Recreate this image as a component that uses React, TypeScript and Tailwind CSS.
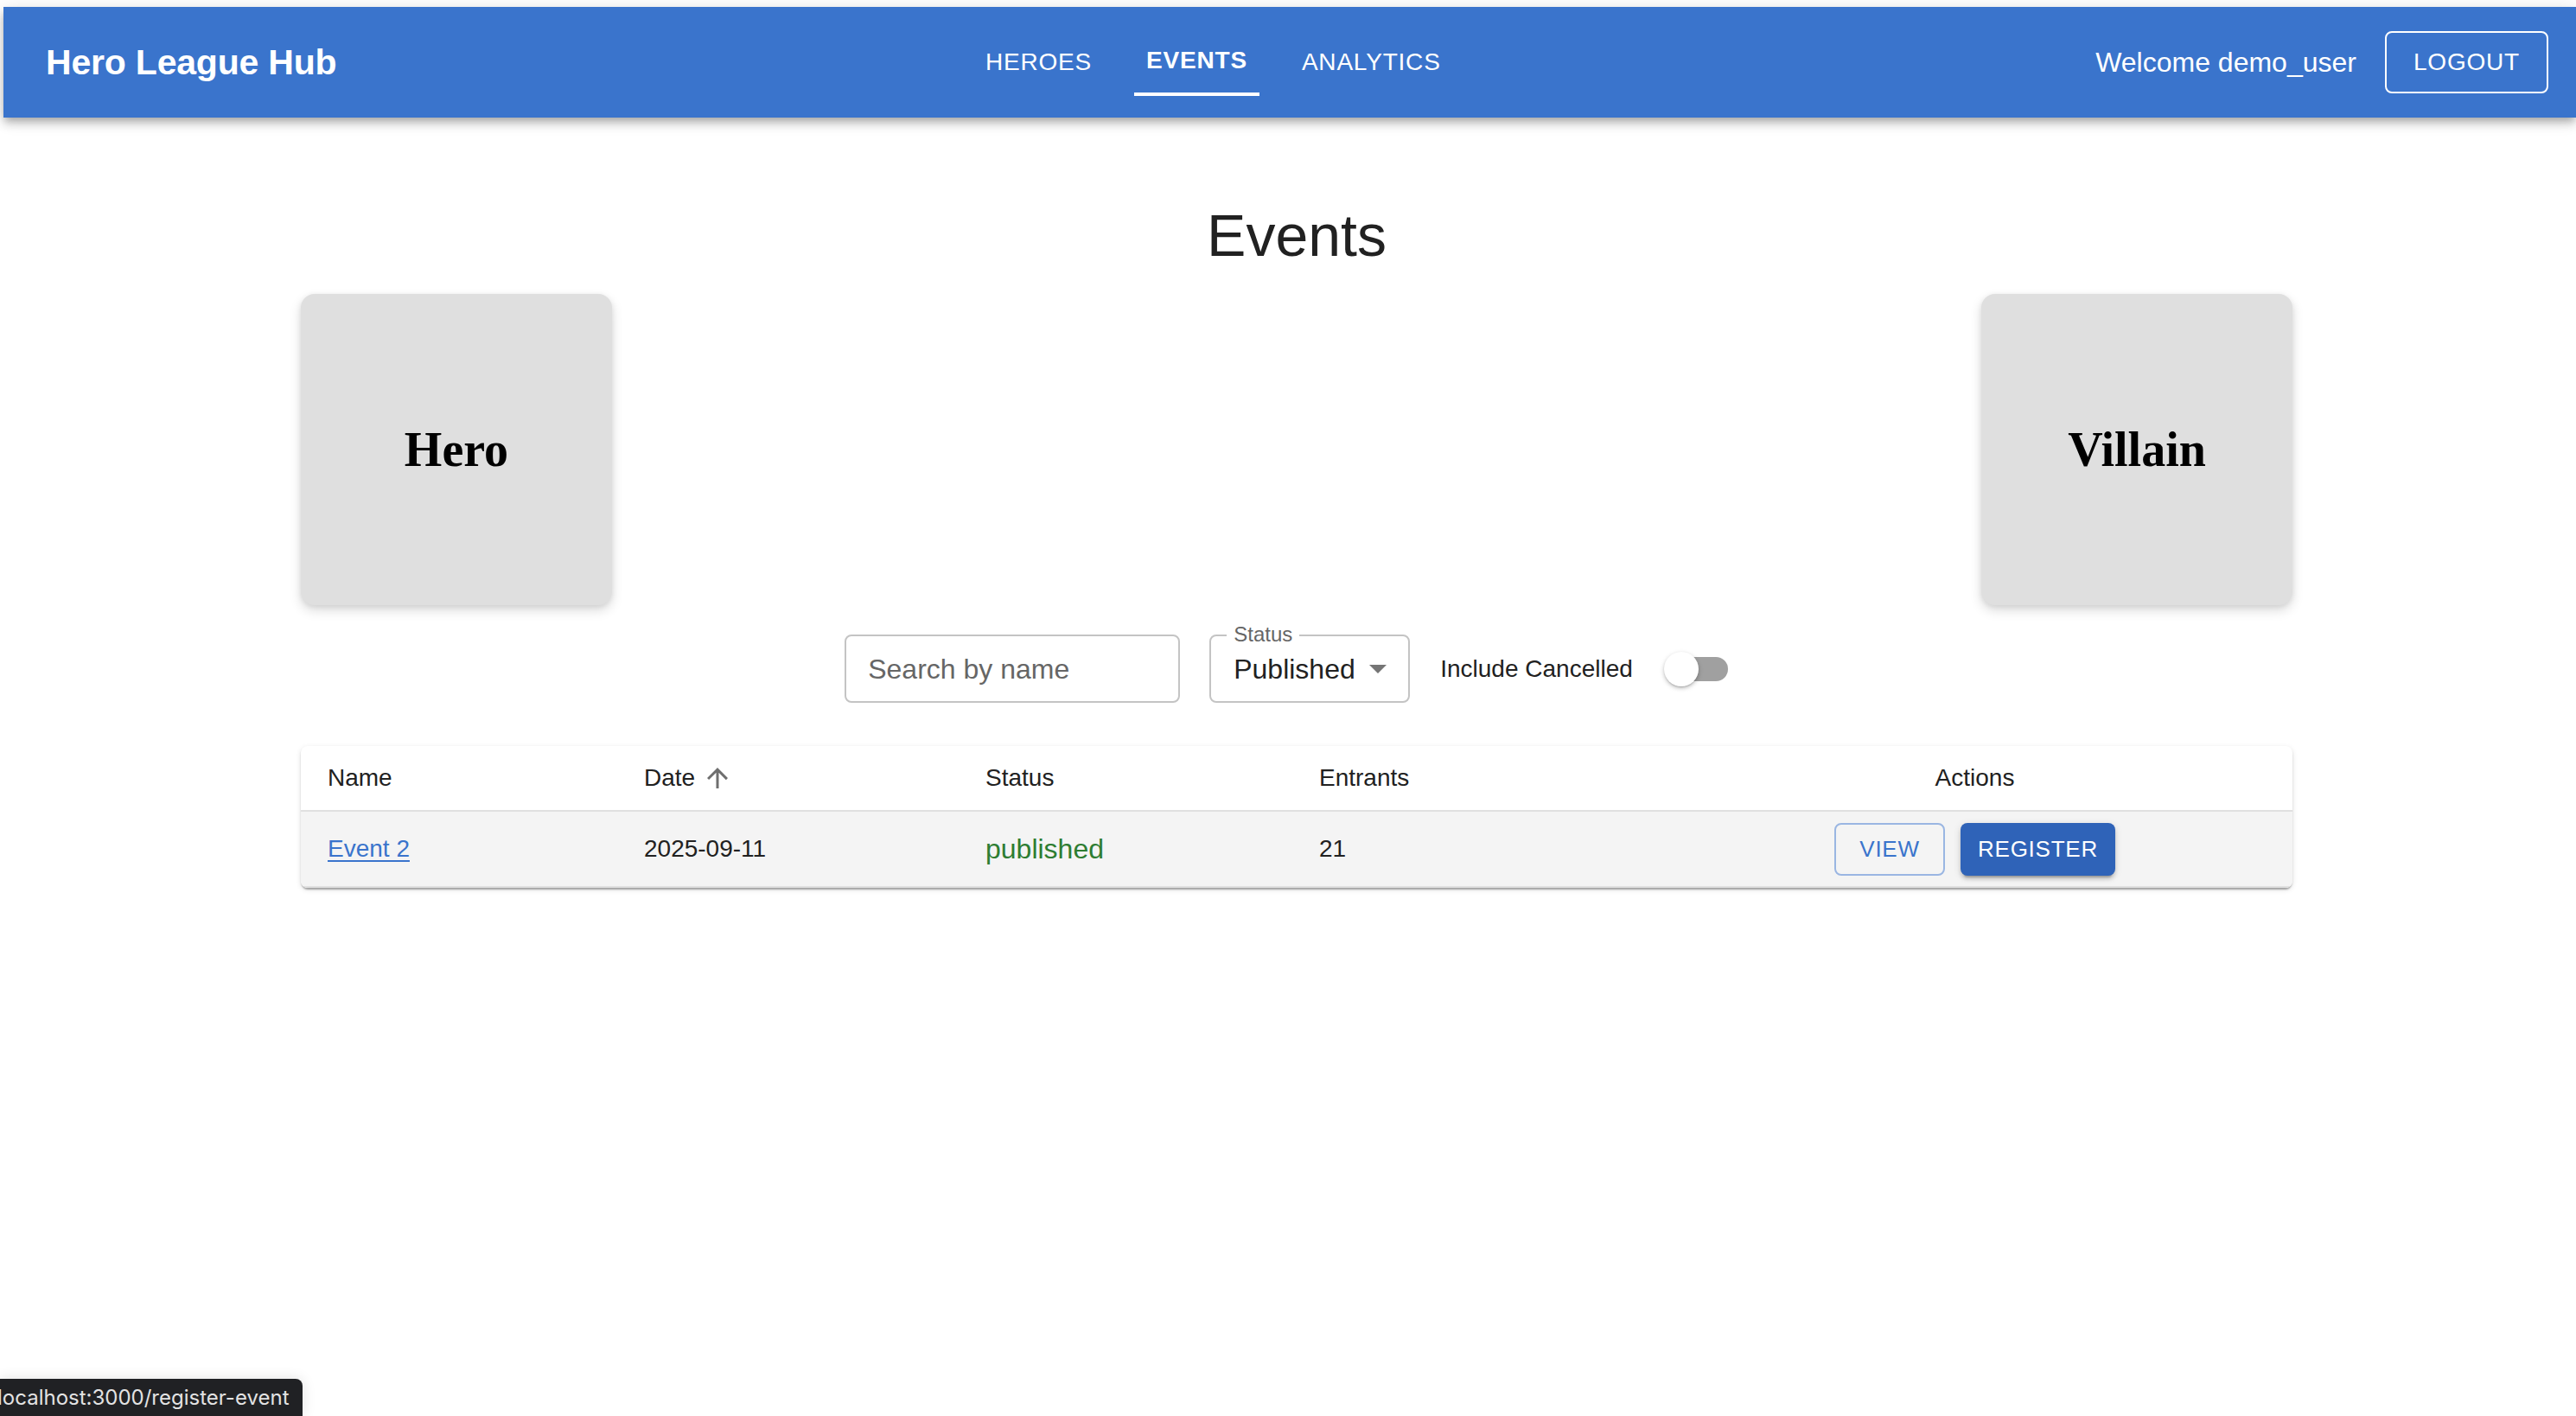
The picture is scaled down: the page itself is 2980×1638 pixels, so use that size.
import React from "react";

function ArrowUp() {
  return (
    <svg width="36" height="36" viewBox="0 0 24 24" className="ml-[8px]" fill="#6e6e6e">
      <path d="M4 12l1.41 1.41L11 7.83V20h2V7.83l5.58 5.59L20 12l-8-8-8 8z" />
    </svg>
  );
}

function DropArrow() {
  return (
    <svg width="20" height="10" viewBox="0 0 20 10" fill="#757575">
      <path d="M0 0 L20 0 L10 10 Z" />
    </svg>
  );
}

export default function App() {
  return (
    <div className="relative h-[1638px] w-[2980px] overflow-hidden bg-white font-['Liberation_Sans',Arial,sans-serif] text-[#212121]">
      <div className="pt-[8px]">
        <div className="pl-[4px]">
          <header className="flex h-[128px] items-stretch bg-[#3a74cc] pl-[49px] pr-[32px] text-white shadow-[0_4px_8px_-2px_rgba(0,0,0,0.2),0_8px_10px_0_rgba(0,0,0,0.14),0_2px_20px_0_rgba(0,0,0,0.12)]">
            <div className="flex w-[1073px] items-center">
              <span className="text-[41px] font-bold leading-none tracking-[-0.2px]">Hero League Hub</span>
            </div>
            <nav className="flex items-stretch gap-[35px] text-[28px] uppercase tracking-[0.8px]">
              <div className="flex items-center px-[14px]">HEROES</div>
              <div className="flex flex-col items-stretch pt-[37px]">
                <div className="px-[14px] text-center font-bold leading-[49px]">EVENTS</div>
                <div className="mt-[13px] h-[4px] bg-white" />
              </div>
              <div className="flex items-center px-[14px]">ANALYTICS</div>
            </nav>
            <div className="flex flex-1 items-center justify-end gap-[33px]">
              <span className="text-[32px]">Welcome demo_user</span>
              <button className="flex h-[72px] items-center rounded-[8px] border-2 border-white px-[31px] text-[28px] tracking-[0.8px]">
                LOGOUT
              </button>
            </div>
          </header>
        </div>

        <main className="ml-[348px] w-[2304px]">
          <h1 className="mt-[94px] text-center text-[68px] font-normal leading-[84px]">Events</h1>

          <div className="mt-[26px] flex justify-between">
            <div className="flex h-[360px] w-[360px] items-center justify-center rounded-[16px] bg-[#dfdfdf] shadow-[0_6px_14px_rgba(0,0,0,0.14),0_2px_6px_rgba(0,0,0,0.08)]">
              <span className="font-['Liberation_Serif','Times_New_Roman',serif] text-[56px] font-bold text-black">Hero</span>
            </div>
            <div className="flex h-[360px] w-[360px] items-center justify-center rounded-[16px] bg-[#dfdfdf] shadow-[0_6px_14px_rgba(0,0,0,0.14),0_2px_6px_rgba(0,0,0,0.08)]">
              <span className="font-['Liberation_Serif','Times_New_Roman',serif] text-[56px] font-bold text-black">Villain</span>
            </div>
          </div>

          <div className="mt-[34px] flex items-center justify-center">
            <div className="flex h-[79px] w-[388px] items-center rounded-[8px] border-2 border-[#c4c4c4] px-[25px] text-[32px] text-[#666]">
              Search by name
            </div>
            <div className="relative ml-[34px] flex h-[79px] w-[232px] items-center justify-between rounded-[8px] border-2 border-[#c4c4c4] pl-[26px] pr-[25px]">
              <span className="absolute left-[18px] top-[-14px] bg-white px-[8px] text-[24px] leading-[24px] text-[#666]">Status</span>
              <span className="text-[32px] text-[#212121]">Published</span>
              <DropArrow />
            </div>
            <span className="ml-[35px] text-[28px] text-[#212121]">Include Cancelled</span>
            <div className="relative ml-[18px] h-[76px] w-[116px]">
              <div className="absolute left-[24px] top-[24px] h-[28px] w-[68px] rounded-full bg-[#a0a0a0]" />
              <div className="absolute left-[18px] top-[18px] h-[40px] w-[40px] rounded-full bg-white shadow-[0_2px_2px_-1px_rgba(0,0,0,0.2),0_2px_4px_0_rgba(0,0,0,0.14),0_2px_6px_0_rgba(0,0,0,0.12)]" />
            </div>
          </div>

          <div className="mt-[50px] overflow-hidden rounded-[8px] bg-white shadow-[0_4px_2px_-2px_rgba(0,0,0,0.2),0_2px_2px_0_rgba(0,0,0,0.14),0_2px_6px_0_rgba(0,0,0,0.12)]">
            <div className="grid h-[76px] grid-cols-[365px_395px_386px_423px_1fr] items-center border-b-2 border-[#e0e0e0] text-[28px]">
              <div className="pl-[31px]">Name</div>
              <div className="flex items-center pl-[32px]">
                <span>Date</span>
                <ArrowUp />
              </div>
              <div className="pl-[32px]">Status</div>
              <div className="pl-[32px]">Entrants</div>
              <div className="text-center">Actions</div>
            </div>
            <div className="grid h-[88px] grid-cols-[365px_395px_386px_423px_1fr] items-center border-b-2 border-[#e0e0e0] bg-[#f4f4f4] text-[28px]">
              <div className="pl-[31px]">
                <a className="text-[#3a74cc] underline decoration-[2px] underline-offset-[4px]">Event 2</a>
              </div>
              <div className="pl-[32px]">2025-09-11</div>
              <div className="pl-[32px] text-[32px] text-[#2e7d32]">published</div>
              <div className="pl-[32px]">21</div>
              <div className="flex items-center justify-center gap-[18px]">
                <button className="flex h-[61px] min-w-[128px] items-center justify-center rounded-[8px] border-2 border-[#9ab6e2] px-[18px] text-[26px] tracking-[0.75px] text-[#3a74cc]">
                  VIEW
                </button>
                <button className="flex h-[61px] items-center justify-center rounded-[8px] bg-[#2f63b8] px-[20px] text-[26px] tracking-[0.75px] text-white shadow-[0_6px_2px_-4px_rgba(0,0,0,0.2),0_4px_4px_0_rgba(0,0,0,0.14),0_2px_10px_0_rgba(0,0,0,0.12)]">
                  REGISTER
                </button>
              </div>
            </div>
          </div>
        </main>
      </div>

      <div className="absolute bottom-0 left-0 flex h-[43px] w-[350px] items-center overflow-hidden rounded-tr-[8px] bg-[#202124] shadow-[0_0_16px_rgba(0,0,0,0.12)]">
        <span className="ml-[-3px] whitespace-nowrap font-['Inter',sans-serif] text-[24px] text-[#e3e3e3]">localhost:3000/register-event</span>
      </div>
    </div>
  );
}
